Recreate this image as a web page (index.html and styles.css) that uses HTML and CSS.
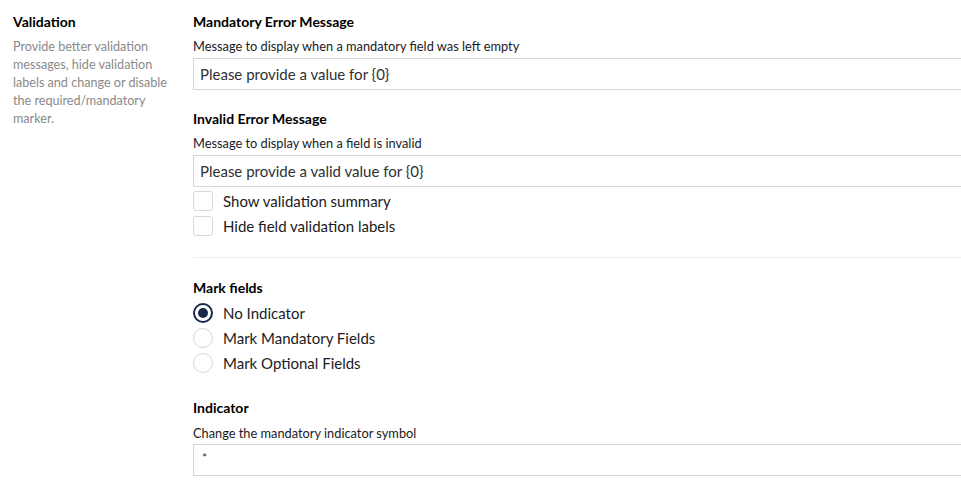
FILE: index.html
```html
<!DOCTYPE html>
<html lang="en">
<head>
<meta charset="utf-8">
<title>Validation settings</title>
<link rel="stylesheet" href="styles.css">
</head>
<body>
<div class="page">
  <aside class="side">
    <h2 class="side-title">Validation</h2>
    <p class="side-desc">Provide better validation messages, hide validation labels and change or disable the required/mandatory marker.</p>
  </aside>
  <main class="main">
    <div class="group">
      <div class="label">Mandatory Error Message</div>
      <div class="desc">Message to display when a mandatory field was left empty</div>
      <input class="text" type="text" value="Please provide a value for {0}">
    </div>
    <div class="group">
      <div class="label">Invalid Error Message</div>
      <div class="desc">Message to display when a field is invalid</div>
      <input class="text" type="text" value="Please provide a valid value for {0}">
      <div class="checks">
        <label class="row"><span class="box"></span><span>Show validation summary</span></label>
        <label class="row"><span class="box"></span><span>Hide field validation labels</span></label>
      </div>
    </div>
    <hr class="sep">
    <div class="group mark">
      <div class="label">Mark fields</div>
      <div class="radios">
        <label class="row"><span class="radio on"></span><span>No Indicator</span></label>
        <label class="row"><span class="radio"></span><span>Mark Mandatory Fields</span></label>
        <label class="row"><span class="radio"></span><span>Mark Optional Fields</span></label>
      </div>
    </div>
    <div class="group ind">
      <div class="label">Indicator</div>
      <div class="desc">Change the mandatory indicator symbol</div>
      <input class="text small" type="text" value="*">
    </div>
  </main>
</div>
</body>
</html>
```

FILE: styles.css
```css
html, body {
  margin: 0;
  padding: 0;
  overflow: hidden;
  background: #fff;
}
body {
  font-family: Lato, "Open Sans", sans-serif;
  color: #303033;
}
.page {
  display: flex;
  gap: 20px;
  padding: 12px 0 0 13px;
}
.side {
  width: 160px;
  flex: none;
}
.side-title {
  margin: 0 0 6px;
  font-size: 14px;
  line-height: 20px;
  font-weight: 700;
  color: #000;
}
.side-desc {
  margin: 0;
  font-size: 12.6px;
  line-height: 18px;
  color: #8a8a8a;
}
.main {
  flex: 1;
  min-width: 0;
}
.group {
  margin-bottom: 19px;
}
.label {
  font-size: 14px;
  line-height: 20px;
  font-weight: 700;
  color: #000;
  margin-bottom: 5px;
}
.desc {
  font-size: 12.8px;
  line-height: 18px;
  color: #1b1b1e;
  margin-bottom: 3px;
}
.text {
  display: block;
  box-sizing: border-box;
  width: 100%;
  height: 32px;
  margin: 0;
  padding: 0 6px;
  border: 1px solid #d6d5d8;
  border-right: none;
  border-radius: 0;
  font-family: Lato, "Open Sans", sans-serif;
  font-size: 15px;
  color: #303033;
  background: #fff;
  outline: none;
}
.text.small {
  font-size: 12px;
  padding: 0 8px 6px;
}
.checks {
  margin-top: 1px;
}
.row {
  display: flex;
  align-items: center;
  gap: 10px;
  height: 25px;
  font-size: 15px;
  color: #1b1b1e;
}
.box {
  box-sizing: border-box;
  width: 20px;
  height: 20px;
  border: 1px solid #d8d7d9;
  border-radius: 3px;
  background: #fff;
  flex: none;
}
.sep {
  margin: 18px 0 20px;
  border: 0;
  border-top: 1px solid #eeeef0;
  height: 0;
}
.mark .label {
  margin-bottom: 2px;
}
.mark {
  margin-bottom: 23px;
}
.radio {
  box-sizing: border-box;
  width: 20px;
  height: 20px;
  border: 1px solid #d8d7d9;
  border-radius: 50%;
  background: #fff;
  flex: none;
  display: flex;
  align-items: center;
  justify-content: center;
}
.radio.on {
  border: 2px solid #1b264f;
}
.radio.on::after {
  content: "";
  width: 10px;
  height: 10px;
  border-radius: 50%;
  background: #1b264f;
}
.ind .label {
  margin-bottom: 6px;
}
.ind .desc {
  margin-bottom: 2px;
}
```
